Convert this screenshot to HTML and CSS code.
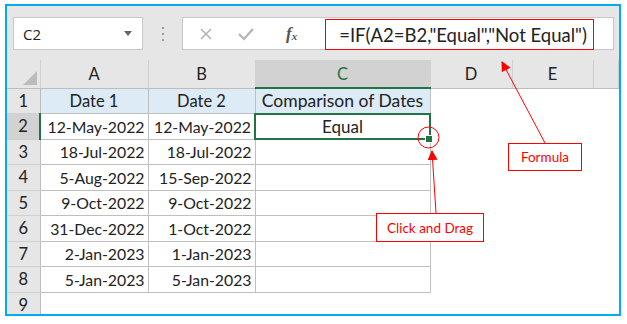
FILE: index.html
```html
<!DOCTYPE html>
<html lang="en">
<head>
    <meta charset="UTF-8">
    <title>Compare Dates</title>
    <link rel="stylesheet" href="styles.css">
</head>
<body>
    <div class="frame">
        <div class="toolbar">
            <div class="namebox">
                <span>C2</span>
                <span class="caret"></span>
            </div>
            <div class="grip"><i></i><i></i><i></i></div>
            <div class="fbar">
                <svg class="icon" width="14" height="14" viewBox="0 0 14 14"><path d="M2 2 L12 12 M12 2 L2 12" stroke="#b4b4b4" stroke-width="1.6" fill="none"/></svg>
                <svg class="icon check" width="18" height="14" viewBox="0 0 18 14"><path d="M2 7 L7 12 L16 2" stroke="#b4b4b4" stroke-width="2.2" fill="none"/></svg>
                <span class="fx">f<sub>x</sub></span>
                <span class="formula">=IF(A2=B2,"Equal","Not Equal")</span>
            </div>
        </div>

        <table class="sheet">
            <colgroup>
                <col class="c-num"><col class="c-a"><col class="c-b"><col class="c-c"><col class="c-d"><col class="c-e"><col>
            </colgroup>
            <tr class="heads">
                <th class="corner"><span class="tri"></span></th>
                <th>A</th><th>B</th><th class="sel">C</th><th>D</th><th>E</th><th></th>
            </tr>
            <tr>
                <th class="rn">1</th>
                <td class="box hd">Date 1</td><td class="box hd">Date 2</td><td class="box hd">Comparison of Dates</td><td></td><td></td><td></td>
            </tr>
            <tr>
                <th class="rn rsel">2</th>
                <td class="box">12-May-2022</td><td class="box">12-May-2022</td><td class="box active">Equal<span class="handle"></span></td><td></td><td></td><td></td>
            </tr>
            <tr>
                <th class="rn">3</th>
                <td class="box">18-Jul-2022</td><td class="box">18-Jul-2022</td><td class="box"></td><td></td><td></td><td></td>
            </tr>
            <tr>
                <th class="rn">4</th>
                <td class="box">5-Aug-2022</td><td class="box">15-Sep-2022</td><td class="box"></td><td></td><td></td><td></td>
            </tr>
            <tr>
                <th class="rn">5</th>
                <td class="box">9-Oct-2022</td><td class="box">9-Oct-2022</td><td class="box"></td><td></td><td></td><td></td>
            </tr>
            <tr>
                <th class="rn">6</th>
                <td class="box">31-Dec-2022</td><td class="box">1-Oct-2022</td><td class="box"></td><td></td><td></td><td></td>
            </tr>
            <tr>
                <th class="rn">7</th>
                <td class="box">2-Jan-2023</td><td class="box">1-Jan-2023</td><td class="box"></td><td></td><td></td><td></td>
            </tr>
            <tr>
                <th class="rn">8</th>
                <td class="box">5-Jan-2023</td><td class="box">5-Jan-2023</td><td class="box"></td><td></td><td></td><td></td>
            </tr>
            <tr>
                <th class="rn">9</th>
                <td></td><td></td><td></td><td></td><td></td><td></td>
            </tr>
        </table>
    </div>

    <!-- annotations drawn over the screenshot -->
    <svg class="marks" width="627" height="324" viewBox="0 0 627 324">
        <defs>
            <marker id="tip" markerWidth="10" markerHeight="10" refX="9" refY="5" orient="auto" markerUnits="userSpaceOnUse">
                <path d="M0 0 L10 5 L0 10 Z" fill="#ff0000"/>
            </marker>
        </defs>
        <line x1="545" y1="143" x2="502" y2="62" stroke="#ff0000" stroke-width="1" marker-end="url(#tip)"/>
        <line x1="436" y1="213" x2="432" y2="151" stroke="#ff0000" stroke-width="1" marker-end="url(#tip)"/>
        <circle cx="428.5" cy="137.5" r="10.5" fill="none" stroke="#ff0000" stroke-width="1"/>
    </svg>
    <div class="note note-formula">Formula</div>
    <div class="note note-drag">Click and Drag</div>
</body>
</html>
```

FILE: styles.css
```css
body {
    margin: 0;
    position: relative;
    width: 627px;
    height: 324px;
    background: #ffffff;
    font-family: Lato, 'Open Sans', sans-serif;
    color: #222;
}
.frame {
    margin: 4px 0 0 5px;
    width: 616px;
    height: 312px;
    border: 2px solid #00adef;
    box-sizing: border-box;
    overflow: hidden;
    background: #ffffff;
}
.toolbar {
    height: 54px;
    background: #e6e6e6;
    display: flex;
    align-items: flex-start;
    padding: 11px 0 0 6px;
    box-sizing: border-box;
}
.namebox {
    width: 130px;
    height: 33px;
    box-sizing: border-box;
    background: #fff;
    border: 1px solid #c8c8c8;
    display: flex;
    align-items: center;
    justify-content: space-between;
    padding: 0 10px 0 9px;
    font-family: 'Open Sans', sans-serif;
    font-size: 15px;
    color: #222;
}
.caret {
    width: 0;
    height: 0;
    border-left: 4px solid transparent;
    border-right: 4px solid transparent;
    border-top: 5px solid #666;
}
.grip {
    width: 39px;
    height: 33px;
    display: flex;
    flex-direction: column;
    align-items: center;
    justify-content: center;
    gap: 4px;
}
.grip i {
    width: 2px;
    height: 2px;
    background: #9a9a9a;
}
.fbar {
    width: 432px;
    height: 33px;
    box-sizing: border-box;
    background: #fff;
    border: 1px solid #c8c8c8;
    display: flex;
    align-items: center;
    padding-left: 16px;
}
.icon {
    display: block;
}
.check {
    margin-left: 24px;
}
.fx {
    margin-left: 31px;
    font-family: 'Liberation Serif', serif;
    font-style: italic;
    font-weight: bold;
    font-size: 17px;
    color: #555;
}
.fx sub {
    font-size: 11px;
    vertical-align: -1px;
}
.formula {
    margin-left: 28px;
    align-self: flex-start;
    margin-top: 1px;
    height: 31px;
    width: 269px;
    box-sizing: border-box;
    border: 1px solid #ff0000;
    display: flex;
    align-items: center;
    padding-left: 13px;
    font-size: 18.5px;
    color: #222;
    white-space: nowrap;
}
.sheet {
    border-collapse: collapse;
    table-layout: fixed;
    width: 612px;
    font-size: 15.8px;
}
.c-num { width: 33px; }
.c-a { width: 108px; }
.c-b { width: 107px; }
.c-c { width: 175px; }
.c-d { width: 82px; }
.c-e { width: 81px; }
.sheet th, .sheet td {
    padding: 0 3px;
    white-space: nowrap;
    overflow: visible;
}
.sheet tr {
    height: 25.5px;
}
.sheet tr.heads {
    height: 28px;
}
.heads th {
    background: #e6e6e6;
    font-weight: normal;
    font-size: 16.5px;
    color: #222;
    border-right: 1px solid #d0d0d0;
    border-bottom: 1px solid #bdbdbd;
}
.heads th.sel {
    background: #d2d2d2;
    color: #217346;
    border-bottom: 2px solid #217346;
}
.corner {
    position: relative;
}
.tri {
    position: absolute;
    right: 3px;
    bottom: 3px;
    width: 0;
    height: 0;
    border-left: 14px solid transparent;
    border-bottom: 14px solid #bcbcbc;
}
.rn {
    background: #e6e6e6;
    font-weight: normal;
    font-size: 16.5px;
    color: #222;
    text-align: center;
    border-right: 1px solid #bdbdbd;
    border-bottom: 1px solid #d0d0d0;
}
.rn.rsel {
    background: #d2d2d2;
    border-right: 2px solid #217346;
}
.box {
    border: 1px solid #bfbfbf;
    text-align: right;
}
.box.hd {
    background: #ddebf7;
    text-align: center;
    font-size: 16.5px;
}
.box.hd:nth-child(4) {
    font-size: 17.5px;
    padding: 0;
}
.box.active {
    position: relative;
    text-align: center;
    border: 2px solid #217346;
    font-size: 17px;
}
.handle {
    position: absolute;
    right: -4px;
    bottom: -5px;
    width: 6px;
    height: 6px;
    background: #217346;
    border: 1px solid #fff;
}
.marks {
    position: absolute;
    left: 0;
    top: 0;
    pointer-events: none;
}
.note {
    position: absolute;
    box-sizing: border-box;
    border: 1px solid #ff0000;
    background: #fff;
    color: #ff0000;
    font-size: 13.5px;
    display: flex;
    align-items: center;
    justify-content: center;
}
.note-formula {
    left: 508px;
    top: 143px;
    width: 74px;
    height: 28px;
}
.note-drag {
    left: 376px;
    top: 213px;
    width: 108px;
    height: 29px;
}
```
